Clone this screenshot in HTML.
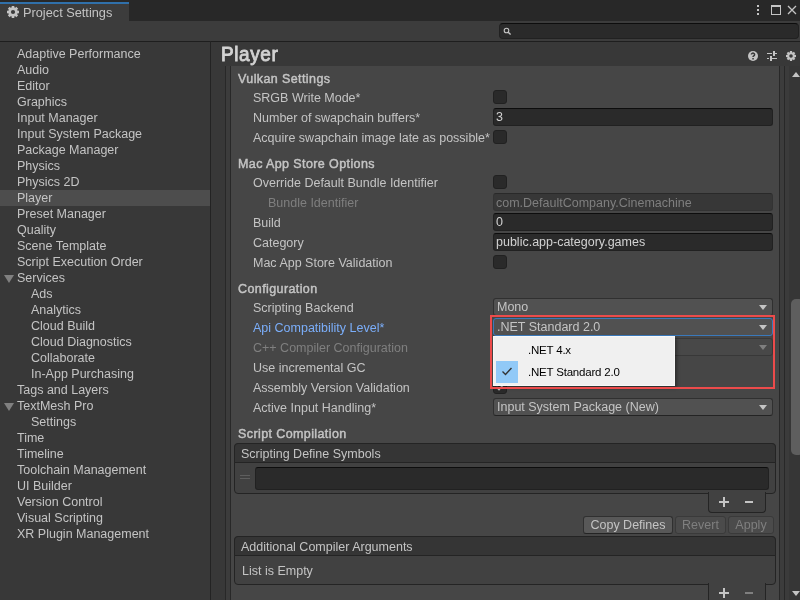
<!DOCTYPE html>
<html><head><meta charset="utf-8">
<style>
*{box-sizing:border-box;margin:0;padding:0}
html,body{-webkit-font-smoothing:antialiased;width:800px;height:600px;overflow:hidden;background:#383838;font-family:"Liberation Sans",sans-serif;font-size:12.5px;color:#c4c4c4}
.a{position:absolute}
.t{position:absolute;line-height:16px;white-space:nowrap;will-change:transform}
.b{font-weight:normal;-webkit-text-stroke:0.45px #c4c4c4;letter-spacing:0.4px}
.sel{position:absolute;left:0;width:210px;height:16px;background:#4d4d4d}
.fold{position:absolute;left:3.5px;width:0;height:0;border-left:5px solid transparent;border-right:5px solid transparent;border-top:8.5px solid #808080}
.cb{position:absolute;left:493px;width:14px;height:14px;background:#2a2a2a;border:1px solid #212121;border-radius:3px}
.tf{position:absolute;left:493px;width:280px;height:18px;background:#2a2a2a;border:1px solid #212121;border-top-color:#0d0d0d;border-radius:3px}
.dd{position:absolute;left:493px;width:280px;height:18px;background:#515151;border:1px solid #303030;border-bottom-color:#242424;border-radius:3px}
.arr{position:absolute;right:5px;top:6px;width:0;height:0;border-left:4px solid transparent;border-right:4px solid transparent;border-top:5px solid #c4c4c4}
.btn{will-change:transform;position:absolute;height:18px;background:#585858;border:1px solid #303030;border-bottom-color:#242424;border-radius:3px;text-align:center;line-height:16px}
</style></head><body>
<!-- title bar -->
<div class="a" style="left:0;top:0;width:800px;height:21px;background:#282828"></div>
<div class="a" style="left:0;top:2px;width:129px;height:19px;background:#3c3c3c"></div>
<div class="a" style="left:0;top:2px;width:129px;height:2px;background:#3070aa"></div>
<svg class="a" style="left:7px;top:6px" width="12" height="12" viewBox="0 0 12 12"><circle cx="6" cy="6" r="4.7" fill="#c4c4c4"/><rect x="4.70" y="0.00" width="2.6" height="2.50" fill="#c4c4c4" transform="rotate(0 6 6)"/><rect x="4.70" y="0.00" width="2.6" height="2.50" fill="#c4c4c4" transform="rotate(45 6 6)"/><rect x="4.70" y="0.00" width="2.6" height="2.50" fill="#c4c4c4" transform="rotate(90 6 6)"/><rect x="4.70" y="0.00" width="2.6" height="2.50" fill="#c4c4c4" transform="rotate(135 6 6)"/><rect x="4.70" y="0.00" width="2.6" height="2.50" fill="#c4c4c4" transform="rotate(180 6 6)"/><rect x="4.70" y="0.00" width="2.6" height="2.50" fill="#c4c4c4" transform="rotate(225 6 6)"/><rect x="4.70" y="0.00" width="2.6" height="2.50" fill="#c4c4c4" transform="rotate(270 6 6)"/><rect x="4.70" y="0.00" width="2.6" height="2.50" fill="#c4c4c4" transform="rotate(315 6 6)"/><circle cx="6" cy="6" r="2.1" fill="#3c3c3c"/></svg>
<div class="t" style="left:23px;top:5px;color:#c4c4c4;font-size:12.75px">Project Settings</div>
<div class="a" style="left:757px;top:5px;width:2px;height:2px;background:#c4c4c4"></div>
<div class="a" style="left:757px;top:9px;width:2px;height:2px;background:#c4c4c4"></div>
<div class="a" style="left:757px;top:13px;width:2px;height:2px;background:#c4c4c4"></div>
<div class="a" style="left:771px;top:5px;width:10px;height:10px;border:1px solid #c4c4c4;border-top-width:2px"></div>
<svg class="a" style="left:787px;top:5px" width="10" height="10" viewBox="0 0 10 10"><path d="M1 1L9 9M9 1L1 9" stroke="#c4c4c4" stroke-width="1.3"/></svg>
<!-- toolbar -->
<div class="a" style="left:0;top:21px;width:800px;height:20px;background:#3c3c3c"></div>
<div class="a" style="left:0;top:41px;width:800px;height:1px;background:#1e1e1e"></div>
<div class="a" style="left:499px;top:23px;width:300px;height:16px;background:#2a2a2a;border:1px solid #212121;border-top-color:#0d0d0d;border-radius:4px"></div>
<svg class="a" style="left:502px;top:26px" width="10" height="10" viewBox="0 0 10 10"><circle cx="4.5" cy="4.5" r="2.3" fill="none" stroke="#c4c4c4" stroke-width="1.1"/><path d="M6.2 6.2L8.6 8.6" stroke="#c4c4c4" stroke-width="1.4"/></svg>
<!-- left panel -->
<div class="t" style="left:17px;top:46px">Adaptive Performance</div>
<div class="t" style="left:17px;top:62px">Audio</div>
<div class="t" style="left:17px;top:78px">Editor</div>
<div class="t" style="left:17px;top:94px">Graphics</div>
<div class="t" style="left:17px;top:110px">Input Manager</div>
<div class="t" style="left:17px;top:126px">Input System Package</div>
<div class="t" style="left:17px;top:142px">Package Manager</div>
<div class="t" style="left:17px;top:158px">Physics</div>
<div class="t" style="left:17px;top:174px">Physics 2D</div>
<div class="sel" style="top:190px"></div>
<div class="t" style="left:17px;top:190px">Player</div>
<div class="t" style="left:17px;top:206px">Preset Manager</div>
<div class="t" style="left:17px;top:222px">Quality</div>
<div class="t" style="left:17px;top:238px">Scene Template</div>
<div class="t" style="left:17px;top:254px">Script Execution Order</div>
<div class="fold" style="top:275px"></div>
<div class="t" style="left:17px;top:270px">Services</div>
<div class="t" style="left:31px;top:286px">Ads</div>
<div class="t" style="left:31px;top:302px">Analytics</div>
<div class="t" style="left:31px;top:318px">Cloud Build</div>
<div class="t" style="left:31px;top:334px">Cloud Diagnostics</div>
<div class="t" style="left:31px;top:350px">Collaborate</div>
<div class="t" style="left:31px;top:366px">In-App Purchasing</div>
<div class="t" style="left:17px;top:382px">Tags and Layers</div>
<div class="fold" style="top:403px"></div>
<div class="t" style="left:17px;top:398px">TextMesh Pro</div>
<div class="t" style="left:31px;top:414px">Settings</div>
<div class="t" style="left:17px;top:430px">Time</div>
<div class="t" style="left:17px;top:446px">Timeline</div>
<div class="t" style="left:17px;top:462px">Toolchain Management</div>
<div class="t" style="left:17px;top:478px">UI Builder</div>
<div class="t" style="left:17px;top:494px">Version Control</div>
<div class="t" style="left:17px;top:510px">Visual Scripting</div>
<div class="t" style="left:17px;top:526px">XR Plugin Management</div>
<div class="a" style="left:210px;top:41px;width:1px;height:559px;background:#232323"></div>
<!-- header -->
<div class="t" style="left:221px;top:44px;font-size:19px;line-height:22px;color:#d2d2d2;-webkit-text-stroke:0.8px #d2d2d2;letter-spacing:0.6px;transform:scaleY(1.08);transform-origin:0 17px">Player</div>
<svg class="a" style="left:748px;top:51px" width="10" height="10" viewBox="0 0 10 10"><circle cx="5" cy="5" r="5" fill="#c4c4c4"/><path d="M3.4 3.6a1.6 1.5 0 1 1 2.4 1.3c-.5.3-.8.6-.8 1.2" fill="none" stroke="#383838" stroke-width="1.5"/><rect x="4.3" y="7" width="1.5" height="1.5" fill="#383838"/></svg>
<svg class="a" style="left:767px;top:51px" width="10" height="10" viewBox="0 0 10 10"><rect x="0" y="2" width="5" height="1" fill="#c4c4c4"/><rect x="6" y="0" width="2" height="5" fill="#c4c4c4"/><rect x="8" y="2" width="2" height="1" fill="#c4c4c4"/><rect x="0" y="7" width="2" height="1" fill="#c4c4c4"/><rect x="3" y="5" width="2" height="5" fill="#c4c4c4"/><rect x="5" y="7" width="5" height="1" fill="#c4c4c4"/></svg>
<svg class="a" style="left:786px;top:51px" width="10" height="10" viewBox="0 0 10 10"><circle cx="5" cy="5" r="3.8" fill="#c4c4c4"/><rect x="3.90" y="0.00" width="2.2" height="2.20" fill="#c4c4c4" transform="rotate(0 5 5)"/><rect x="3.90" y="0.00" width="2.2" height="2.20" fill="#c4c4c4" transform="rotate(45 5 5)"/><rect x="3.90" y="0.00" width="2.2" height="2.20" fill="#c4c4c4" transform="rotate(90 5 5)"/><rect x="3.90" y="0.00" width="2.2" height="2.20" fill="#c4c4c4" transform="rotate(135 5 5)"/><rect x="3.90" y="0.00" width="2.2" height="2.20" fill="#c4c4c4" transform="rotate(180 5 5)"/><rect x="3.90" y="0.00" width="2.2" height="2.20" fill="#c4c4c4" transform="rotate(225 5 5)"/><rect x="3.90" y="0.00" width="2.2" height="2.20" fill="#c4c4c4" transform="rotate(270 5 5)"/><rect x="3.90" y="0.00" width="2.2" height="2.20" fill="#c4c4c4" transform="rotate(315 5 5)"/><circle cx="5" cy="5" r="1.8" fill="#383838"/></svg>
<!-- content frame -->
<div class="a" style="left:225px;top:66px;width:1px;height:534px;background:#282828"></div>
<div class="a" style="left:226px;top:66px;width:4px;height:534px;background:#3c3c3c"></div>
<div class="a" style="left:230px;top:66px;width:1px;height:534px;background:#282828"></div>
<div class="a" style="left:231px;top:66px;width:548px;height:534px;background:#464646"></div>
<div class="a" style="left:779px;top:66px;width:1px;height:534px;background:#282828"></div>
<div class="a" style="left:780px;top:66px;width:4px;height:534px;background:#3c3c3c"></div>
<div class="a" style="left:784px;top:66px;width:1px;height:534px;background:#282828"></div>
<div class="a" style="left:785px;top:66px;width:4px;height:534px;background:#3b3b3b"></div>
<!-- scrollbar -->
<div class="a" style="left:789px;top:66px;width:11px;height:534px;background:#363636"></div>
<div class="a" style="left:791px;top:299px;width:13px;height:156px;background:#5e5e5e;border-radius:5px"></div>
<div class="a" style="left:792px;top:72px;width:0;height:0;border-left:4px solid transparent;border-right:4px solid transparent;border-bottom:5px solid #c4c4c4"></div>
<div class="a" style="left:792px;top:591px;width:0;height:0;border-left:4px solid transparent;border-right:4px solid transparent;border-top:5px solid #c4c4c4"></div>

<!-- Vulkan -->
<div class="t b" style="left:238px;top:71px">Vulkan Settings</div>
<div class="t" style="left:253px;top:90px">SRGB Write Mode*</div>
<div class="cb" style="top:90px"></div>
<div class="t" style="left:253px;top:110px">Number of swapchain buffers*</div>
<div class="tf" style="top:108px"><div class="t" style="left:2px;top:0px;color:#d2d2d2">3</div></div>
<div class="t" style="left:253px;top:130px">Acquire swapchain image late as possible*</div>
<div class="cb" style="top:130px"></div>

<!-- Mac -->
<div class="t b" style="left:238px;top:156px">Mac App Store Options</div>
<div class="t" style="left:253px;top:175px">Override Default Bundle Identifier</div>
<div class="cb" style="top:175px"></div>
<div class="t" style="left:268px;top:195px;color:#7f7f7f">Bundle Identifier</div>
<div class="tf" style="top:193px;opacity:.5"></div>
<div class="t" style="left:496px;top:195px;color:#7f7f7f">com.DefaultCompany.Cinemachine</div>
<div class="t" style="left:253px;top:215px">Build</div>
<div class="tf" style="top:213px"><div class="t" style="left:2px;top:0px;color:#d2d2d2">0</div></div>
<div class="t" style="left:253px;top:235px">Category</div>
<div class="tf" style="top:233px"><div class="t" style="left:2px;top:0px;color:#d2d2d2">public.app-category.games</div></div>
<div class="t" style="left:253px;top:255px">Mac App Store Validation</div>
<div class="cb" style="top:255px"></div>

<!-- Configuration -->
<div class="t b" style="left:238px;top:281px">Configuration</div>
<div class="t" style="left:253px;top:300px">Scripting Backend</div>
<div class="dd" style="top:298px"><div class="t" style="left:3px;top:0px">Mono</div><div class="arr"></div></div>
<div class="t" style="left:253px;top:320px;color:#7baefa">Api Compatibility Level*</div>
<div class="dd" style="top:318px;border-color:#3a79bb"><div class="t" style="left:3px;top:0px">.NET Standard 2.0</div><div class="arr"></div></div>
<div class="t" style="left:253px;top:340px;color:#7f7f7f">C++ Compiler Configuration</div>
<div class="dd" style="top:338px;background:#484848;border-color:#383838"><div class="arr" style="border-top-color:#7f7f7f"></div></div>
<div class="t" style="left:253px;top:360px">Use incremental GC</div>
<div class="cb" style="top:360px"></div>
<div class="t" style="left:253px;top:380px">Assembly Version Validation</div>
<div class="cb" style="top:380px"><svg class="a" style="left:1px;top:1px" width="10" height="10" viewBox="0 0 10 10"><path d="M1.5 5L4 7.5 8.5 2.5" fill="none" stroke="#c4c4c4" stroke-width="1.6"/></svg></div>
<div class="t" style="left:253px;top:400px">Active Input Handling*</div>
<div class="dd" style="top:398px"><div class="t" style="left:3px;top:0px">Input System Package (New)</div><div class="arr"></div></div>

<!-- Script Compilation -->
<div class="t b" style="left:238px;top:426px">Script Compilation</div>
<div class="a" style="left:234px;top:443px;width:542px;height:51px;background:#414141;border:1px solid #242424;border-radius:4px"></div>
<div class="a" style="left:234px;top:443px;width:542px;height:20px;background:#353535;border:1px solid #242424;border-radius:4px 4px 0 0"></div>
<div class="t" style="left:241px;top:446px">Scripting Define Symbols</div>
<div class="a" style="left:240px;top:475px;width:10px;height:1px;background:#5e5e5e"></div>
<div class="a" style="left:240px;top:478px;width:10px;height:1px;background:#5e5e5e"></div>
<div class="a" style="left:255px;top:467px;width:514px;height:23px;background:#2a2a2a;border:1px solid #212121;border-top-color:#0d0d0d;border-radius:3px"></div>
<div class="a" style="left:708px;top:492px;width:58px;height:21px;background:#414141;border:1px solid #242424;border-top:none;border-radius:0 0 4px 4px"></div>
<div class="a" style="left:719px;top:501px;width:10px;height:2px;background:#c4c4c4"></div><div class="a" style="left:723px;top:497px;width:2px;height:10px;background:#c4c4c4"></div><div class="a" style="left:745px;top:501px;width:8px;height:2px;background:#c4c4c4"></div>

<div class="btn" style="left:583px;top:516px;width:90px">Copy Defines</div>
<div class="btn" style="left:675px;top:516px;width:51px;background:#4b4b4b;border-color:#3a3a3a;color:#7f7f7f">Revert</div>
<div class="btn" style="left:728px;top:516px;width:46px;background:#4b4b4b;border-color:#3a3a3a;color:#7f7f7f">Apply</div>

<div class="a" style="left:234px;top:536px;width:542px;height:49px;background:#414141;border:1px solid #242424;border-radius:4px"></div>
<div class="a" style="left:234px;top:536px;width:542px;height:20px;background:#353535;border:1px solid #242424;border-radius:4px 4px 0 0"></div>
<div class="t" style="left:241px;top:539px">Additional Compiler Arguments</div>
<div class="t" style="left:242px;top:563px">List is Empty</div>
<div class="a" style="left:708px;top:583px;width:58px;height:21px;background:#414141;border:1px solid #242424;border-top:none;border-radius:0 0 4px 4px"></div>
<div class="a" style="left:719px;top:592px;width:10px;height:2px;background:#c4c4c4"></div><div class="a" style="left:723px;top:588px;width:2px;height:10px;background:#c4c4c4"></div><div class="a" style="left:745px;top:592px;width:8px;height:2px;background:#7f7f7f"></div>

<!-- popup -->
<div class="a" style="left:493px;top:336px;width:182px;height:50px;background:#f0f0f0;border:1px solid #f8f8f8;box-shadow:2px 2px 3px rgba(0,0,0,.35)"></div>
<div class="a" style="left:496px;top:361px;width:22px;height:22px;background:#91c9f7"></div>
<svg class="a" style="left:500px;top:364px" width="14" height="14" viewBox="0 0 14 14"><path d="M2.5 7.5L5.5 10.5 11.5 4" fill="none" stroke="#333" stroke-width="1.4"/></svg>
<div class="t" style="left:528px;top:342px;color:#000;font-size:11.5px;letter-spacing:-0.2px">.NET 4.x</div>
<div class="t" style="left:528px;top:364px;color:#000;font-size:11.5px;letter-spacing:-0.2px">.NET Standard 2.0</div>
<!-- red highlight -->
<div class="a" style="left:490px;top:315px;width:285px;height:74px;border:2px solid #ec4b4b"></div>
</body></html>
